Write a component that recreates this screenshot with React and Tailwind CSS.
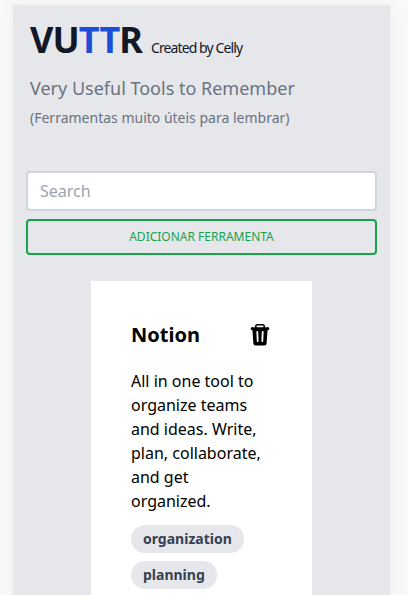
const tool = {
  name: "Notion",
  description:
    "All in one tool to organize teams and ideas. Write, plan, collaborate, and get organized.",
  tags: ["organization", "planning"],
};

function TrashIcon() {
  return (
    <svg viewBox="0 0 24 24" className="size-6" aria-hidden="true">
      <path
        d="M7.8 5V3.3Q7.8 1.7 9.3 1.7H14.7Q16.2 1.7 16.2 3.3V5"
        fill="none"
        stroke="currentColor"
        strokeWidth="1.5"
      />
      <rect x="2.8" y="4.2" width="18.4" height="2.8" rx="0.9" fill="currentColor" />
      <path
        d="M4.3 6H19.7L18.6 20.4Q18.4 22.4 16.6 22.4H7.4Q5.6 22.4 5.4 20.4Z"
        fill="currentColor"
      />
      <path
        d="M9.3 8.9L9.7 18.1M14.7 8.9L14.3 18.1"
        stroke="white"
        strokeWidth="1.8"
        strokeLinecap="round"
      />
    </svg>
  );
}

function Header() {
  return (
    <header className="px-1">
      <h1 className="text-4xl leading-10 font-bold tracking-tight text-[#111827]">
        VU<span className="text-[#1d4ed8]">TT</span>R
        <span className="ml-[9px] text-sm font-normal">Created by Celly</span>
      </h1>
      <p className="mt-3.5 text-lg leading-7 text-[#6b7280]">Very Useful Tools to Remember</p>
      <p className="mt-1.5 text-sm leading-5 text-[#6b7280]">(Ferramentas muito úteis para lembrar)</p>
    </header>
  );
}

function ToolCard({ name, description, tags }) {
  return (
    <article className="mx-auto mt-[26px] w-[221px] bg-white p-10 pb-12 text-black">
      <div className="flex items-center justify-between">
        <h2 className="text-xl leading-7 font-bold">{name}</h2>
        <button aria-label="Remove">
          <TrashIcon />
        </button>
      </div>
      <p className="mt-5 text-base leading-6">{description}</p>
      <div className="mt-3 flex flex-col items-start gap-2">
        {tags.map((tag) => (
          <span key={tag} className="rounded-full bg-[#e5e7eb] px-3 py-1 text-sm leading-5 font-bold text-[#374151]">
            {tag}
          </span>
        ))}
      </div>
    </article>
  );
}

export default function App() {
  return (
    <div className="h-screen overflow-hidden bg-[#f7faf9] pt-[5px] pr-[18px] pl-[13px] font-['Noto_Sans',sans-serif]">
      <main className="min-h-[700px] bg-[#e5e7eb] px-[13px] pt-[15px] shadow-[0_0_20px_rgba(0,0,0,0.05),0_0_1px_rgba(0,0,0,0.08)]">
        <Header />
        <input
          placeholder="Search"
          className="mt-[43px] block h-10 w-full rounded border-2 border-[#d1d5db] bg-white px-3 text-base text-black placeholder:text-[#9ca3af]"
        />
        <button className="mt-2 block h-9 w-full rounded border-2 border-[#16a34a] text-xs leading-4 text-[#16a34a] uppercase">
          Adicionar ferramenta
        </button>
        <ToolCard {...tool} />
      </main>
    </div>
  );
}
